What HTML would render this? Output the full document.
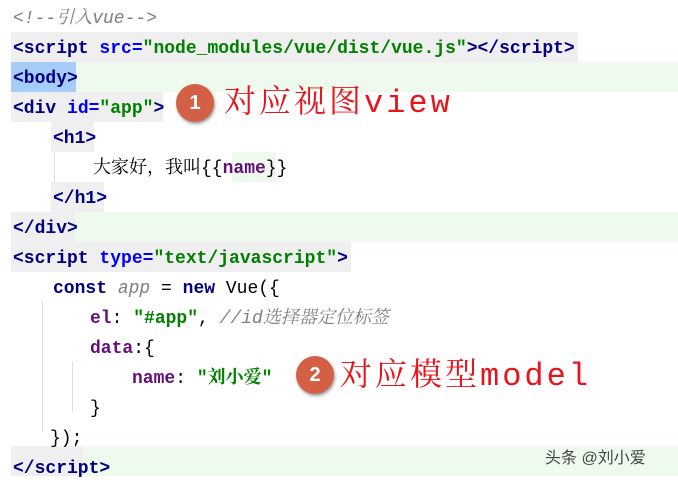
<html><head><style>
body{margin:0;width:678px;height:476px;background:#fff;position:relative;overflow:hidden;font-family:"Liberation Mono","Noto Serif CJK SC",monospace;font-size:18px}
.l{position:absolute;left:13px;height:30px;line-height:30px;white-space:pre;color:#000;margin-top:2px}
.bg{position:absolute;height:30px}
.t{color:#000080;font-weight:bold}
.a{color:#0000ff;font-weight:bold}
.s{color:#008000;font-weight:bold}
.c{color:#808080;font-style:italic;font-family:"Liberation Mono","Noto Serif CJK SC",serif;font-weight:normal}
.p{color:#660e7a;font-weight:bold}
.k{color:#000080;font-weight:bold}
.r{position:absolute;color:#e8141c;font-size:32px;letter-spacing:3px;font-family:"Liberation Mono","Noto Serif CJK SC",serif;line-height:40px}
.n{position:absolute;width:38px;height:38px;border-radius:50%;background:#d35f45;color:#fff;font:bold 20px "Liberation Sans",sans-serif;text-align:center;line-height:38px;box-shadow:1px 2px 3px #999}
.g{position:absolute;width:1px;background:#ddd}
</style></head><body>
<div class="bg" style="left:76px;top:62px;width:602px;background:#eefaee"></div>
<div class="bg" style="left:11px;top:62px;width:65px;background:#a6cdf8"></div>
<div class="bg" style="left:11px;top:32px;width:567px;background:#efefef"></div>
<div class="bg" style="left:11px;top:92px;width:152px;background:#efefef"></div>
<div class="bg" style="left:51px;top:122px;width:43px;background:#efefef"></div>
<div class="bg" style="left:51px;top:182px;width:53px;background:#efefef"></div>
<div class="bg" style="left:75px;top:212px;width:603px;background:#eefaee"></div>
<div class="bg" style="left:11px;top:212px;width:64px;background:#efefef"></div>
<div class="bg" style="left:11px;top:242px;width:340px;background:#efefef"></div>
<div class="bg" style="left:83px;top:446px;width:595px;background:#eefaee"></div>
<div class="bg" style="left:11px;top:446px;width:72px;background:#efefef"></div>
<div class="bg" style="left:232px;top:152px;width:44px;background:#eefaee"></div>
<div class="g" style="left:54px;top:152px;height:30px"></div>
<div class="g" style="left:42px;top:302px;height:130px"></div>
<div class="g" style="left:72px;top:362px;height:50px"></div>
<div class="l c" style="top:2px">&lt;!--引入vue--&gt;</div>
<div class="l" style="top:32px"><span class="t">&lt;script </span><span class="a">src=</span><span class="s">"node_modules/vue/dist/vue.js"</span><span class="t">&gt;&lt;/script&gt;</span></div>
<div class="l t" style="top:62px">&lt;body&gt;</div>
<div class="l" style="top:92px"><span class="t">&lt;div </span><span class="a">id=</span><span class="s">"app"</span><span class="t">&gt;</span></div>
<div class="l t" style="top:122px;left:53px">&lt;h1&gt;</div>
<div class="l" style="top:152px;left:93px">大家好，我叫{{<span class="p">name</span>}}</div>
<div class="l t" style="top:182px;left:53px">&lt;/h1&gt;</div>
<div class="l t" style="top:212px">&lt;/div&gt;</div>
<div class="l" style="top:242px"><span class="t">&lt;script </span><span class="a">type=</span><span class="s">"text/javascript"</span><span class="t">&gt;</span></div>
<div class="l" style="top:272px;left:53px"><span class="k">const</span> <span class="c">app</span> = <span class="k">new</span> Vue({</div>
<div class="l" style="top:302px;left:90px"><span class="p">el</span>: <span class="s">"#app"</span>, <span class="c">//id选择器定位标签</span></div>
<div class="l" style="top:332px;left:90px"><span class="p">data</span>:{</div>
<div class="l" style="top:362px;left:132px"><span class="p">name</span>: <span class="s">"刘小爱"</span></div>
<div class="l" style="top:392px;left:90px">}</div>
<div class="l" style="top:422px;left:50px">});</div>
<div class="l t" style="top:452px">&lt;/script&gt;</div>
<div class="n" style="left:176px;top:84px">1</div>
<div class="r" style="left:224px;top:84px">对应视图view</div>
<div class="n" style="left:296px;top:356px">2</div>
<div class="r" style="left:340px;top:357px">对应模型model</div>
<div style="position:absolute;left:545px;top:444px;color:#444;font:16px 'Liberation Sans','Noto Sans CJK SC',sans-serif">头条 @刘小爱</div>
</body></html>
